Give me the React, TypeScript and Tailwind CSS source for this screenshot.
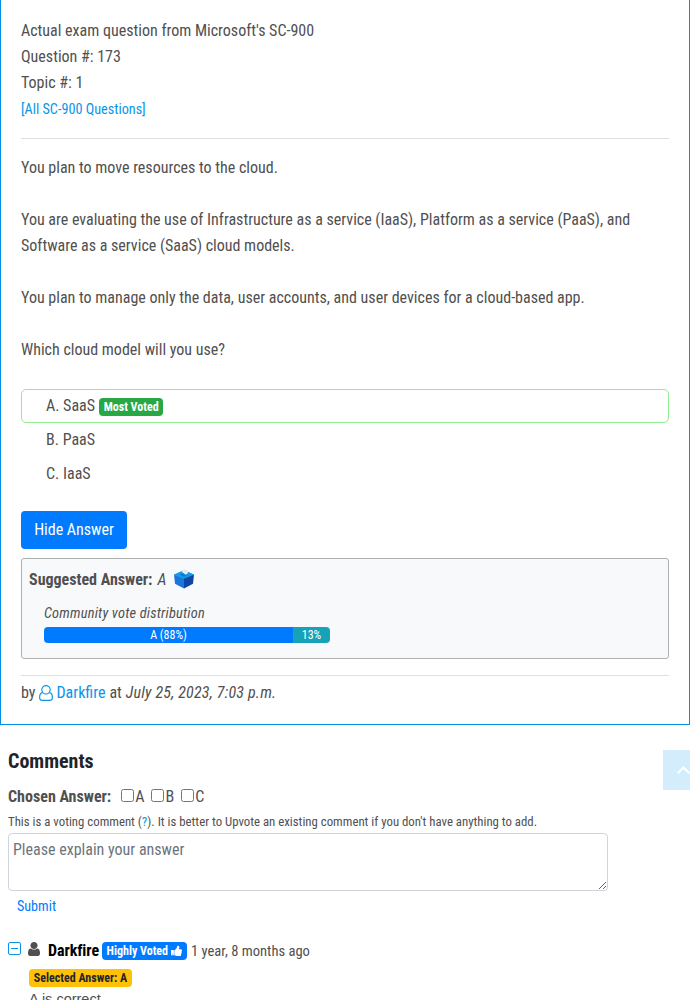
const options = ['A', 'B', 'C'];

function BallotBox() {
  return (
    <svg className="mb-[2px] ml-[8px] inline-block h-5 w-5" viewBox="0 0 20 20">
      <path d="M0 5.500 10 1l10 4.500L10 10.500Z" fill="#0f9bea" />
      <path d="M0 5.500 10 9.800v9.700L1 14.800Z" fill="#1a75dc" />
      <path d="M20 5.500 10 9.800v9.700l9-4.700Z" fill="#0d47a1" />
      <path d="M6 5.800 10 4l4 1.500-4 2.200Z" fill="#0a78cc" />
      <path d="M7 1.800 10.800 0l1.200 1.400 2 .6-.4 2.800-2.100 1L9.500 4.300Z" fill="#e3eaf2" />
    </svg>
  );
}

function UserOutline() {
  return (
    <svg className="ml-1 mr-[3px] h-4 w-[14px]" viewBox="0 0 14 16" fill="none" stroke="#0b94e7" strokeWidth="1.15">
      <circle cx="7" cy="4.800" r="4.200" />
      <path d="M3.700 7.400C1.500 7.900.6 9.900.6 12.600c0 1.700 1 2.800 2.500 2.800h7.800c1.500 0 2.500-1.100 2.500-2.800 0-2.700-.9-4.700-3.100-5.200" />
    </svg>
  );
}

function UserSolid() {
  return (
    <svg className="mb-[5px] ml-[7px] h-[14px] w-3" viewBox="256 128 1280 1536" preserveAspectRatio="none" fill="currentColor">
      <path d="M1536 1399q0 109-62.500 187t-150.500 78h-854q-88 0-150.500-78t-62.500-187q0-85 8.500-160.500t31.500-152 58.500-131 94-89 134.500-34.500q131 128 313 128t313-128q76 0 134.500 34.500t94 89 58.500 131 31.500 152 8.500 160.500zm-256-887q0 159-112.500 271.500t-271.500 112.500-271.500-112.500-112.500-271.500 112.500-271.500 271.500-112.500 271.500 112.500 112.500 271.500z" />
    </svg>
  );
}

function ThumbUp() {
  return (
    <svg className="mb-[1px] ml-[3px] h-[11px] w-[11px]" viewBox="0 128 1600 1536" fill="currentColor">
      <path d="M256 1408q0-26-19-45t-45-19-45 19-19 45 19 45 45 19 45-19 19-45zm160-512v640q0 26-19 45t-45 19h-288q-26 0-45-19t-19-45v-640q0-26 19-45t45-19h288q26 0 45 19t19 45zm1184 0q0 86-55 149 15 44 15 76 3 76-43 137 17 56 0 117-15 57-54 94 9 112-49 181-64 76-197 78h-129q-66 0-144-15.500t-121.500-29-120.500-39.500q-123-43-158-44-26-1-45-19.500t-19-44.500v-641q0-25 18-43.500t43-20.500q24-2 76-59t101-121q68-87 101-120 18-18 31-48t17.500-48.500 13.500-60.500q7-39 12.500-61t19.500-52 34-50q19-19 45-19 46 0 82.500 10.500t60 26 40 40.500 24 45 12 50 5 45 .5 39q0 38-9.500 76t-19 60-27.500 56q-3 6-10 18t-11 22-8 24h277q78 0 135 57t57 135z" />
    </svg>
  );
}

export default function App() {
  return (
    <div className="relative h-[1000px] overflow-hidden bg-white font-['Roboto_Condensed','Roboto',sans-serif] text-base leading-[26px] text-[#505050]">
      <section className="h-[725px] border-x border-b border-[#0090e3] px-5 pt-[18px]">
        <div>Actual exam question from Microsoft's SC-900</div>
        <div>Question #: 173</div>
        <div>Topic #: 1</div>
        <div className="pt-[1px] text-[14.2px] leading-[25px] text-[#0b94e7]">[All SC-900 Questions]</div>
        <hr className="mt-[16px] border-[#dfdfdf]" />

        <div className="mt-[16px] space-y-[26px]">
          <p>You plan to move resources to the cloud.</p>
          <p>
            You are evaluating the use of Infrastructure as a service (IaaS), Platform as a service (PaaS), and
            Software as a service (SaaS) cloud models.
          </p>
          <p>You plan to manage only the data, user accounts, and user devices for a cloud-based app.</p>
          <p>Which cloud model will you use?</p>
        </div>

        <ul className="mt-[26px]">
          <li className="flex h-[34px] items-center rounded-[5px] border border-[#90ee90] pl-6">
            A. SaaS
            <span className="ml-1 mt-[2px] rounded bg-[#28a745] px-[4.600px] text-xs font-bold leading-[18px] text-white">Most Voted</span>
          </li>
          <li className="flex h-[34px] items-center pl-[25px]">B. PaaS</li>
          <li className="flex h-[34px] items-center pl-[25px]">C. IaaS</li>
        </ul>

        <button className="mt-5 block h-[38px] w-[106px] rounded bg-[#007bff] text-white">Hide Answer</button>

        <div className="mt-[9px] h-[101px] rounded-[3px] border border-[#b0b0b0] bg-[#f8f9fb] pl-[7px] pt-[8px]">
          <div className="flex items-center">
            <b>Suggested Answer:</b>
            <i className="ml-[5px]">A</i>
            <BallotBox />
          </div>
          <div className="ml-[15px] mt-2 text-[14.4px] italic leading-[26px] tracking-[0.2px]">Community vote distribution</div>
          <div className="ml-[15px] flex h-4 w-[286px] overflow-hidden rounded text-center text-xs leading-4 text-white">
            <div className="w-[249px] bg-[#007bff]">A (88%)</div>
            <div className="w-[37px] bg-[#17a2b8]">13%</div>
          </div>
        </div>

        <hr className="mt-4 border-[#dfdfdf]" />
        <div className="mt-[4px] flex items-center">
          by
          <UserOutline />
          <span className="mr-1 text-[#0b94e7]">Darkfire</span>
          at
          <i className="ml-1 tracking-[0.190px]">July 25, 2023, 7:03 p.m.</i>
        </div>
      </section>

      <section className="px-2">
        <h2 className="mt-[23px] text-xl font-bold leading-[26px] text-[#212529]">Comments</h2>
        <div className="mt-[10px] flex items-center">
          <b>Chosen Answer:</b>
          <div className="ml-[10px] flex gap-[7px]">
            {options.map((o) => (
              <label key={o} className="flex items-center">
                <input type="checkbox" className="mb-[3px] mr-[1px] h-[13px] w-[13px]" />
                {o}
              </label>
            ))}
          </div>
        </div>
        <div className="mt-[2px] text-[12.8px] leading-[20px]">
          This is a voting comment (<span className="text-[#0b94e7]">?</span>). It is better to Upvote an existing comment if you don't have anything to add.
        </div>
        <textarea
          className="mt-[1px] block h-[58px] w-[600px] rounded border border-[#ced4da] px-1 py-[4px] leading-6 placeholder:text-[#6c757d]"
          placeholder="Please explain your answer"
        />
        <div className="ml-[9px] mt-[2px] text-[14.1px] text-[#007bff]">Submit</div>

        <div className="mt-[19px] flex h-[26px] items-center">
          <svg className="mb-[5px] h-[13px] w-[13px]" viewBox="0 0 13 13" fill="none" stroke="#0b94e7">
            <rect x=".5" y=".5" width="12" height="12" rx="1.5" />
            <path d="M3 6.5h7" />
          </svg>
          <UserSolid />
          <b className="ml-2 tracking-[-0.080px] text-black">Darkfire</b>
          <span className="ml-[3px] flex w-[85px] items-center rounded bg-[#007bff] pl-[4.600px] text-xs font-bold leading-[18px] text-white">
            Highly Voted
            <ThumbUp />
          </span>
          <span className="ml-1 text-[14.6px]">1 year, 8 months ago</span>
        </div>
        <div className="ml-[21px] mt-[5px] flex">
          <span className="rounded bg-[#ffc107] px-[4.800px] text-xs font-bold leading-[18px] text-[#212529]">Selected Answer: A</span>
        </div>
        <p className="ml-[21px] font-['Liberation_Sans'] text-[14.5px] leading-6">A is correct</p>
      </section>

      <div className="absolute right-0 top-[750px] flex h-10 w-[27px] overflow-hidden bg-[#d4edfc]">
        <svg className="ml-[14px] mt-[16px] h-2 w-[13px] shrink-0" viewBox="0 0 13 8" fill="none" stroke="#fff" strokeWidth="2">
          <path d="m.7 7.300 5.800-5.800 5.800 5.800" />
        </svg>
      </div>
    </div>
  );
}
